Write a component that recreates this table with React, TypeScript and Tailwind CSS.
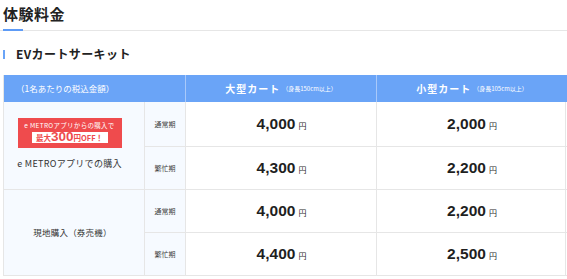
import React from "react";

const jp = "font-['Noto_Sans_CJK_JP','Noto_Sans',sans-serif]";

function Price({ v }: { v: string }) {
  return (
    <div className="flex items-baseline justify-center gap-[3px] text-[#1f1f1f]">
      <span className="font-['Liberation_Sans',Arial,sans-serif] text-[15.5px] font-bold leading-none">{v}</span>
      <span className="text-[8px] leading-none">円</span>
    </div>
  );
}

export default function App() {
  const cellB = "flex items-center justify-center bg-[#f6faff] border-r border-b border-[#e6e6e6] text-[7px] text-[#444]";
  const cellC = "flex items-center justify-center border-r border-b border-[#e6e6e6] pl-[1px]";
  const cellD = "flex items-center justify-center border-b border-[#e6e6e6]";
  return (
    <div className={`w-[567px] h-[279px] overflow-hidden bg-white text-[#222] ${jp}`}>
      <div className="pl-[3px] pt-[4px]">
        <h2 className="text-[15px] font-bold leading-[20px] tracking-[0.5px]">体験料金</h2>
      </div>
      <div className="mt-[5px] flex items-end h-[2px]">
        <div className="w-[3px] h-[1px] bg-[#e6e6e6]" />
        <div className="w-[20px] h-[2px] bg-[#5d9bf6]" />
        <div className="flex-1 h-[1px] bg-[#e6e6e6]" />
      </div>
      <div className="mt-[13px] ml-[3px] flex items-center h-[20px]">
        <div className="w-[2px] h-[9px] bg-[#6aa4f7]" />
        <div className="ml-[11px] text-[12px] font-bold tracking-[0.4px] leading-[20px]">EVカートサーキット</div>
      </div>
      <div className="mt-[11px] ml-[3px] grid w-[563px] grid-cols-[141px_41px_191px_190px] grid-rows-[27px_45px_43px_43px_43px] border-l border-r border-[#e6e6e6]">
        <div className="col-span-2 flex items-center bg-[#6aa4f7] border-r border-[#a9c9fa] pl-[12px] text-[8.5px] text-white">
          （1名あたりの税込金額）
        </div>
        <div className="flex items-center justify-center bg-[#6aa4f7] border-r border-[#a9c9fa] text-white">
          <span className="text-[10px] font-bold tracking-[1px]">大型カート</span>
          <span className="ml-[2px] text-[6px]">（身長150cm以上）</span>
        </div>
        <div className="flex items-center justify-center bg-[#6aa4f7] text-white">
          <span className="text-[10px] font-bold tracking-[1px]">小型カート</span>
          <span className="ml-[2px] text-[6px]">（身長105cm以上）</span>
        </div>

        <div className="row-span-2 flex flex-col items-center justify-center bg-[#f6faff] border-r border-b border-[#e6e6e6] pr-[9px] pb-[4px]">
          <div className="w-[104px] h-[30px] bg-[#ef4b4d] flex flex-col items-center pt-[3px]">
            <div className="text-[6.5px] leading-[9px] text-white tracking-[0.3px]">e METROアプリからの購入で</div>
            <div className="mt-[2px] w-[76px] h-[11px] bg-white flex items-end justify-center text-[#ef4b4d] leading-none pb-[1px]">
              <span className="text-[7.5px] font-bold">最大</span>
              <span className="font-['Liberation_Sans',Arial,sans-serif] text-[13.5px] font-bold leading-[10px]">300</span>
              <span className="text-[7.5px] font-bold">円OFF！</span>
            </div>
          </div>
          <div className="mt-[10px] text-[9px] leading-[12px] tracking-[0.3px] text-[#333]">e METROアプリでの購入</div>
        </div>
        <div className={cellB}>通常期</div>
        <div className={cellC}><Price v="4,000" /></div>
        <div className={cellD}><Price v="2,000" /></div>
        <div className={cellB}>繁忙期</div>
        <div className={cellC}><Price v="4,300" /></div>
        <div className={cellD}><Price v="2,200" /></div>

        <div className="row-span-2 flex items-center justify-center bg-[#f6faff] border-r border-b border-[#e6e6e6] pr-[3px] text-[8.5px] text-[#333] tracking-[0.2px]">
          現地購入（券売機）
        </div>
        <div className={cellB}>通常期</div>
        <div className={cellC}><Price v="4,000" /></div>
        <div className={cellD}><Price v="2,200" /></div>
        <div className={cellB}>繁忙期</div>
        <div className={cellC}><Price v="4,400" /></div>
        <div className={cellD}><Price v="2,500" /></div>
      </div>
    </div>
  );
}
